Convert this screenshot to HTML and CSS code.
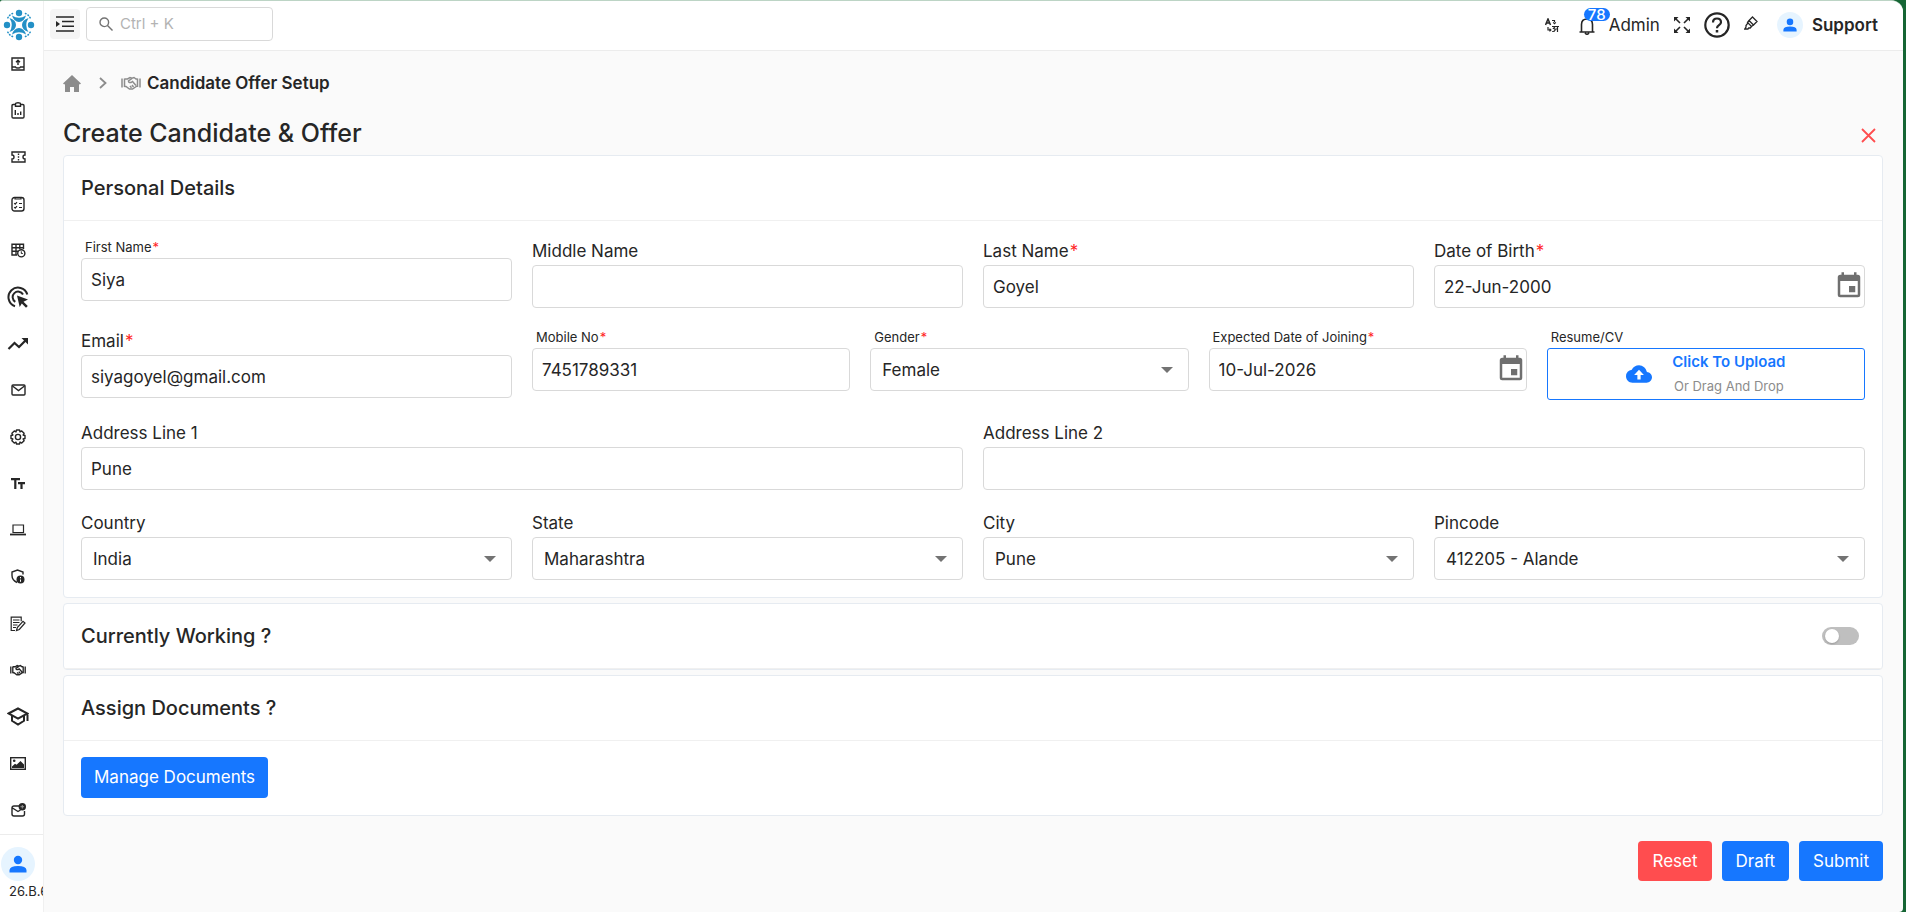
FILE: index.html
```html
<!DOCTYPE html>
<html lang="en">
<head>
<meta charset="utf-8">
<meta name="viewport" content="width=device-width, initial-scale=1">
<title>Candidate Offer Setup</title>
<link rel="stylesheet" href="styles.css">
</head>
<body>
<div class="app">
  <aside class="sidebar">
    <a href="#" class="logo" aria-label="Home">
      <svg width="32" height="32" viewBox="0 0 32 32" fill="#2390c6">
        <circle cx="16" cy="4" r="3.200"/><circle cx="16" cy="28" r="3.200"/><circle cx="4" cy="16" r="3.200"/><circle cx="28" cy="16" r="3.200"/>
        <path d="M9 6.500Q16 11 23 6.500Q21 13 16 13T9 6.500z"/>
        <path d="M9 6.500Q16 11 23 6.500Q21 13 16 13T9 6.500z" transform="rotate(90 16 16)"/>
        <path d="M9 6.500Q16 11 23 6.500Q21 13 16 13T9 6.500z" transform="rotate(180 16 16)"/>
        <path d="M9 6.500Q16 11 23 6.500Q21 13 16 13T9 6.500z" transform="rotate(270 16 16)"/>
        <g fill="none" stroke="#2390c6" stroke-width="1.600" stroke-linecap="round" stroke-dasharray="0.500 2.400"><path d="M9.500 4.500Q6 6 4.500 9.500M22.500 4.500Q26 6 27.500 9.500M9.500 27.500Q6 26 4.500 22.500M22.500 27.500Q26 26 27.500 22.500"/></g>
      </svg>
    </a>
    <nav class="menu" aria-label="Modules">
      <a href="#" aria-label="Outbox"><svg width="14" height="14" viewBox="0 0 14 14"><path d="M1 1h12v12H1zM1 10h3.500c.5 1.400 4.500 1.400 5 0H13M7 8V3.500M5 5.300l2-2 2 2"/></svg></a>
      <a href="#" aria-label="Reports"><svg width="14" height="17" viewBox="0 0 14 17"><path d="M4.500 2.500H2.200Q1 2.500 1 3.700v11.100Q1 16 2.200 16h9.600q1.200 0 1.200-1.200V3.700q0-1.200-1.200-1.200H9.500M4.500 1.800Q4.500.8 7 .8t2.500 1v2.400h-5zM4.300 13V8M7 13v-2M9.700 13V9.500"/></svg></a>
      <a href="#" aria-label="Tickets"><svg width="15" height="12" viewBox="0 0 15 12"><path d="M1 1h13v3q-2 0-2 2t2 2v3H1V8q2 0 2-2T1 4z"/><path d="M7.500 2.500v7" stroke-dasharray="1.500 1.200"/></svg></a>
      <a href="#" aria-label="Tasks"><svg width="14" height="16" viewBox="0 0 14 16"><rect x="1" y="1.500" width="12" height="13.500" rx="2.500"/><path d="M4 1v2h6V1M3.200 7.200l1 1L6 6.200M3.200 11.200l1 1 1.800-2M8 7.500h3M8 11.500h3" stroke-width="1.200"/></svg></a>
      <a href="#" aria-label="Attendance"><svg width="15" height="15" viewBox="0 0 15 15"><path d="M6 12H1V1.200h11.500V6M1 4.700h11.500M1 8.300h6M5 1.200V12M8.800 1.200V6"/><circle cx="10.300" cy="10.300" r="3.600" fill="#fff"/><path d="M10.300 8.300v2.200h1.500" stroke-width="1"/></svg></a>
      <a href="#" aria-label="Goals"><svg width="22" height="22" viewBox="0 0 22 22"><path d="M8 20.300A9.600 9.600 0 1 1 20.300 8.500M8.300 15.800A5.500 5.500 0 1 1 16 8.500" stroke-width="2"/><path d="M10 9.500l11 4-4.500 2.300 4.300 4.200-1.800 1.700-4.200-4.200L12.700 21z" fill="#262626" stroke="none"/></svg></a>
      <a href="#" aria-label="Performance"><svg width="22" height="14" viewBox="0 0 22 14"><path d="M1.500 12l6-6 4.500 4L19 3" stroke-width="2.200"/><path d="M14.500 1H21v6.500z" fill="#262626" stroke="none"/></svg></a>
      <a href="#" aria-label="Mail"><svg width="15" height="12" viewBox="0 0 15 12"><rect x="1" y="1" width="13" height="10" rx="1"/><path d="M1.500 2l6 4.500 6-4.500"/></svg></a>
      <a href="#" aria-label="Settings"><svg width="16" height="16" viewBox="0 0 16 16"><path d="M6.500 1h3l.5 1.900 1.700-1 2.400 2.400-1 1.700 1.900.5v3l-1.900.5 1 1.700-2.400 2.400-1.700-1-.5 1.900h-3L6 13.100l-1.700 1-2.400-2.400 1-1.700L1 9.500v-3L2.900 6l-1-1.700 2.400-2.400 1.700 1z" stroke-linejoin="round"/><circle cx="8" cy="8" r="2.600"/></svg></a>
      <a href="#" aria-label="Text formats"><svg width="14" height="12" viewBox="0 0 14 12"><path d="M0 1.200h9M4.300 1v10M7 5.200h7M10.500 5v6" stroke-width="2.200"/></svg></a>
      <a href="#" aria-label="Assets"><svg width="16" height="12" viewBox="0 0 16 12"><path d="M3 8.500V1h10.500v7.500z" stroke-width="1.200"/><path d="M0 10.500h16" stroke-width="1.800"/></svg></a>
      <a href="#" aria-label="Security"><svg width="14" height="15" viewBox="0 0 14 15"><path d="M6 13.500Q1 11 1 6.500V3l5.500-2 5.500 2v2.500"/><circle cx="9.500" cy="10.500" r="4" fill="#262626" stroke="none"/><path d="M9.500 8v1.300M9.500 10.500v2.300" stroke="#fff" stroke-width="1"/></svg></a>
      <a href="#" aria-label="Notes"><svg width="16" height="16" viewBox="0 0 16 16"><path d="M5 14.500H1.200V1.200h10v4M3 4h6.500M3 6.500h6.500M3 9h4.500M3 11.500h3" stroke-width="1.200"/><path d="M6.500 14.500l.8-3L13 5.300l2 1.700-5.700 6.500z" stroke-width="1.200"/></svg></a>
      <a href="#" aria-label="Offers"><svg width="16" height="12" viewBox="0 0 20 14"><path d="M1 2.500v9M3.500 2.500v8.500M19 2.500v9M16.500 2.500v8.500M3.500 3h3L9 1.500l2 .7L13 1.500 15 3h1.500M3.500 10.500H5L8.500 13h3l4.500-3M11 2.500L7.500 5q0 2 2.500 1.500l1.500-1L15 9.500M11 9l1.500 2M9 10l1.500 1.800" stroke-width="1.700"/></svg></a>
      <a href="#" aria-label="Learning"><svg width="22" height="19" viewBox="0 0 22 19"><path d="M1.500 6.500L11 1.500l9.500 5L11 11.700zM5 8.800v5L11 17.500l6-3.700v-5M20.500 6.500V14" stroke-width="2"/></svg></a>
      <a href="#" aria-label="Gallery"><svg width="16" height="13" viewBox="0 0 16 13"><rect x=".7" y=".7" width="14.600" height="11.600"/><path d="M2 11V9.500L5 6.800l1.600 1L10.500 4 14 7.500V11z" fill="#262626" stroke="none"/><circle cx="4.200" cy="3.800" r="1.300" fill="#262626" stroke="none"/></svg></a>
      <a href="#" aria-label="Invitations"><svg width="15" height="14" viewBox="0 0 15 14"><path d="M8 3H3Q1 3 1 5v6q0 2 2 2h8.500q2 0 2-2V8M1.500 5l5.500 3.500 2.500-1.500"/><circle cx="11.300" cy="3.700" r="3.700" fill="#262626" stroke="none"/><path d="M9.500 3.700h3.600M11.300 2v3.500" stroke="#999" stroke-width="1"/></svg></a>
    </nav>
    <div class="account">
      <button type="button" class="avatar avatar-lg" aria-label="Account"><svg width="18" height="18" viewBox="0 0 18 18" fill="#1677ff"><circle cx="9" cy="5" r="4.200"/><path d="M.5 17.500V15Q1 11 9 11t8.500 4v2.500z"/></svg></button>
      <span class="version">26.B.6</span>
    </div>
  </aside>

  <div class="page">
    <header class="topbar">
      <button type="button" class="collapse" aria-label="Toggle menu"><svg width="18" height="16" viewBox="0 0 18 16" fill="none" stroke="#262626" stroke-width="1.600"><path d="M0 1h18M6 5.500h12M6 10.300h12M0 15h18"/><path d="M0 5v6l4-3z" fill="#262626" stroke="none"/></svg></button>
      <div class="search">
        <svg width="14" height="14" viewBox="0 0 14 14" fill="none" stroke="#737373" stroke-width="1.400"><circle cx="5.300" cy="5.300" r="4.300"/><path d="M8.500 8.500l5 5"/></svg>
        <input type="text" placeholder="Ctrl + K" aria-label="Search">
      </div>
      <div class="tools">
        <button type="button" class="tool" aria-label="Translate"><svg width="14" height="15" viewBox="0 0 14 15" fill="none" stroke="#262626" stroke-width="1.200"><path d="M.5 7L3 1l2.500 6M1.300 5h3.400" stroke-width="1.500"/><path d="M7 2.500h2.500V4M8.200 4.300l1.300 1.400 1.300-1.400M3 9v3h2M4.500 10.700L5.900 12l-1.400 1.400M7 8.500h3l-1.500 2q2 .2 1.500 1.700T7.200 13.500M10.500 8.500H14M12.500 8.500V14M10.500 11h2"/></svg></button>
        <button type="button" class="bell" aria-label="Notifications, 78 unread"><svg width="16" height="18" viewBox="0 0 16 18" fill="none" stroke="#262626" stroke-width="1.600"><path d="M.5 15h15M2.500 15V7.500Q2.500 2 8 2t5.500 5.500V15M6 16q2 2.500 4 0"/></svg><span class="badge">78</span></button>
        <span class="role">Admin</span>
        <button type="button" class="tool fullscreen" aria-label="Full screen"><svg width="16" height="16" viewBox="0 0 16 16" fill="none" stroke="#262626" stroke-width="1.600"><path d="M1.500 1.500l4.500 4.500M14.500 1.500L10 6M1.500 14.500L6 10M14.500 14.500L10 10"/><path d="M0 0h4.500L0 4.500zM16 0v4.500L11.500 0zM0 16v-4.500L4.500 16zM16 16h-4.500l4.500-4.500z" fill="#262626" stroke="none"/></svg></button>
        <button type="button" class="tool help" aria-label="Help"><svg width="26" height="26" viewBox="0 0 26 26" fill="none" stroke="#262626" stroke-width="2.200"><circle cx="13" cy="13" r="11.700"/><path d="M9 10.500Q9 6.500 13 6.500t4 3.700q0 1.600-2 3t-2 3"/><path d="M13 18v2.500" stroke-width="2.500"/></svg></button>
        <button type="button" class="tool marker" aria-label="Theme"><svg width="14" height="14" viewBox="0 0 14 14" fill="none" stroke="#262626" stroke-width="1.300"><path d="M8.500 1L13 5.500 9.500 9 5 4.500zM5 4.500L3.500 6.500l4 4L9.500 9M3.800 7.200L2 9.500V11L.8 13H4l.7-1h1.500l1.300-1.500"/></svg></button>
        <button type="button" class="profile"><span class="avatar"><svg width="14" height="14" viewBox="0 0 18 18" fill="#1677ff"><circle cx="9" cy="5" r="4.200"/><path d="M.5 17.500V15Q1 11 9 11t8.500 4v2.500z"/></svg></span>Support</button>
      </div>
    </header>

    <main class="content">
      <nav class="breadcrumb" aria-label="Breadcrumb">
        <a href="#" aria-label="Home"><svg width="18" height="17" viewBox="0 0 18 17" fill="#8c8c8c"><path d="M9 0l9 8.500-1.200 1L16 9v8h-5v-5H7v5H2V9l-.8.500L0 8.500z"/></svg></a>
        <svg class="chevron" width="8" height="12" viewBox="0 0 8 12" fill="none" stroke="#8c8c8c" stroke-width="1.800"><path d="M1 1l5.500 5L1 11"/></svg>
        <svg width="20" height="14" viewBox="0 0 20 14" fill="none" stroke="#8c8c8c" stroke-width="1.500"><path d="M1 2.500v9M3.500 2.500v8.500M19 2.500v9M16.500 2.500v8.500M3.500 3h3L9 1.500l2 .7L13 1.500 15 3h1.500M3.500 10.500H5L8.500 13h3l4.500-3M11 2.500L7.500 5q0 2 2.500 1.500l1.500-1L15 9.500M11 9l1.500 2M9 10l1.500 1.800"/></svg>
        <span class="crumb">Candidate Offer Setup</span>
      </nav>
      <div class="title-row">
        <h1>Create Candidate &amp; Offer</h1>
        <button type="button" class="close" aria-label="Close"><svg width="15" height="15" viewBox="0 0 15 15" fill="none" stroke="#ff4d4f" stroke-width="1.800"><path d="M1 1l13 13M14 1L1 14"/></svg></button>
      </div>

      <form class="offer">
        <section class="card">
          <h2 class="card-head">Personal Details</h2>
          <div class="card-body rows">
            <div class="row row-4">
              <div class="field small"><label for="first">First Name<b>*</b></label><input id="first" type="text" value="Siya"></div>
              <div class="field"><label for="middle">Middle Name</label><input id="middle" type="text"></div>
              <div class="field"><label for="last">Last Name<b>*</b></label><input id="last" type="text" value="Goyel"></div>
              <div class="field"><label for="dob">Date of Birth<b>*</b></label>
                <div class="date"><input id="dob" type="text" value="22-Jun-2000"><button type="button" aria-label="Choose date of birth"><svg width="30" height="30" viewBox="0 0 24 24" fill="#6f6f6f"><path d="M17 12h-5v5h5zM16 1v2H8V1H6v2H5a2 2 0 0 0-2 2v14a2 2 0 0 0 2 2h14a2 2 0 0 0 2-2V5a2 2 0 0 0-2-2h-1V1zm3 18H5V8h14z"/></svg></button></div></div>
            </div>
            <div class="row row-4">
              <div class="field"><label for="email">Email<b>*</b></label><input id="email" type="email" value="siyagoyel@gmail.com"></div>
              <div class="row row-contact">
                <div class="field small"><label for="mobile">Mobile No<b>*</b></label><input id="mobile" type="tel" value="7451789331"></div>
                <div class="field small"><label for="gender">Gender<b>*</b></label><div class="select"><select id="gender"><option>Female</option><option>Male</option></select></div></div>
                <div class="field small"><label for="joining">Expected Date of Joining<b>*</b></label>
                  <div class="date"><input id="joining" type="text" value="10-Jul-2026"><button type="button" aria-label="Choose date of joining"><svg width="30" height="30" viewBox="0 0 24 24" fill="#6f6f6f"><path d="M17 12h-5v5h5zM16 1v2H8V1H6v2H5a2 2 0 0 0-2 2v14a2 2 0 0 0 2 2h14a2 2 0 0 0 2-2V5a2 2 0 0 0-2-2h-1V1zm3 18H5V8h14z"/></svg></button></div></div>
                <div class="field small"><label for="resume">Resume/CV</label>
                  <button type="button" id="resume" class="upload"><svg width="26" height="26" viewBox="0 0 24 24" fill="#1677ff"><path d="M19.350 10.040A7.490 7.490 0 0 0 12 4C9.110 4 6.600 5.640 5.350 8.040A5.994 5.994 0 0 0 0 14c0 3.310 2.690 6 6 6h13c2.760 0 5-2.240 5-5 0-2.640-2.050-4.780-4.650-4.960zM13.500 13v4h-3v-4H7.500l4.500-5 4.500 5z"/></svg>
                    <span class="upload-text"><strong>Click To Upload</strong><span>Or Drag And Drop</span></span></button></div>
              </div>
            </div>
            <div class="row row-2">
              <div class="field"><label for="addr1">Address Line 1</label><input id="addr1" type="text" value="Pune"></div>
              <div class="field"><label for="addr2">Address Line 2</label><input id="addr2" type="text"></div>
            </div>
            <div class="row row-4">
              <div class="field"><label for="country">Country</label><div class="select"><select id="country"><option>India</option></select></div></div>
              <div class="field"><label for="state">State</label><div class="select"><select id="state"><option>Maharashtra</option></select></div></div>
              <div class="field"><label for="city">City</label><div class="select"><select id="city"><option>Pune</option></select></div></div>
              <div class="field"><label for="pin">Pincode</label><div class="select"><select id="pin"><option>412205 - Alande</option></select></div></div>
            </div>
          </div>
        </section>

        <section class="card">
          <div class="card-head"><h2 id="working">Currently Working ?</h2><input type="checkbox" class="switch" role="switch" aria-labelledby="working"></div>
        </section>

        <section class="card">
          <h2 class="card-head">Assign Documents ?</h2>
          <div class="card-body documents"><button type="button" class="btn">Manage Documents</button></div>
        </section>

        <div class="actions">
          <button type="reset" class="btn danger">Reset</button>
          <button type="button" class="btn">Draft</button>
          <button type="submit" class="btn">Submit</button>
        </div>
      </form>
    </main>
  </div>
</div>
</body>
</html>
```
FILE: styles.css
```css
* { box-sizing: border-box; }
body {
  margin: 0;
  background: #156534;
  color: #262626;
  font: 17px/22px Inter, "Liberation Sans", sans-serif;
}
button, input, select { font: inherit; color: inherit; margin: 0; }
button { border: 0; padding: 0; background: none; cursor: pointer; }
svg { display: block; flex: none; }
h1, h2 { margin: 0; font-weight: 500; }

.app {
  display: flex;
  min-height: 100vh;
  margin-right: 3px;
  border-top: 1px solid #bcd4c5;
  border-radius: 3px 12px 4px 0;
  background: #fafafa;
  overflow: hidden;
}

.sidebar {
  display: flex;
  flex-direction: column;
  flex: none;
  width: 44px;
  background: #fff;
  border-right: 1px solid #f0f0f0;
  overflow: hidden;
}
.logo { padding: 8px 0 0 3px; }
.menu {
  display: flex;
  flex: 1;
  flex-direction: column;
  justify-content: space-between;
  padding: 11px 7px 12px 0;
}
.menu a { display: grid; place-items: center; height: 24px; }
.menu svg { fill: none; stroke: #262626; stroke-width: 1.4; }
.account { height: 78px; border-top: 1px solid #ececec; padding: 12px 0 0 1px; }
.avatar {
  display: grid;
  place-items: center;
  width: 26px;
  height: 26px;
  border-radius: 50%;
  background: #e6f4ff;
}
.avatar-lg { width: 34px; height: 34px; }
.version { display: block; padding-left: 8px; font-size: 13px; line-height: 20px; white-space: nowrap; }

.page { flex: 1; min-width: 0; }
.topbar {
  display: flex;
  align-items: center;
  height: 50px;
  padding: 0 25px 3px 6px;
  background: #fff;
  border-bottom: 1px solid #ececec;
}
.collapse { display: grid; place-items: center; width: 30px; height: 30px; border-radius: 4px; background: #f5f5f5; }
.search {
  display: flex;
  align-items: center;
  gap: 7px;
  width: 187px;
  height: 34px;
  margin-left: 6px;
  padding: 0 12px;
  border: 1px solid #d9d9d9;
  border-radius: 4px;
}
.search input { flex: 1; min-width: 0; padding: 0; border: 0; outline: 0; background: none; font-size: 15px; }
.search input::placeholder { color: #b3b3b3; }
.tools { display: flex; align-items: center; margin-left: auto; padding-top: 2px; }
.bell { position: relative; margin-left: 20px; padding-top: 2px; }
.badge {
  position: absolute;
  left: 5px;
  top: -7px;
  width: 26px;
  height: 13px;
  border-radius: 7px;
  background: #1677ff;
  color: #fff;
  font-size: 15px;
  font-weight: 500;
  line-height: 13px;
}
.role { margin-left: 14px; }
.fullscreen, .help, .marker { margin-left: 14px; }
.marker { padding-bottom: 4px; }
.profile { display: flex; align-items: center; gap: 9px; margin-left: 19px; font-weight: 600; }

.content { padding: 20px 20px 24px 19px; }
.breadcrumb { display: flex; align-items: center; height: 24px; }
.chevron { margin: 0 14px 0 18px; }
.crumb { margin-left: 6px; font-weight: 600; }
.title-row { display: flex; align-items: center; justify-content: space-between; height: 60px; padding: 16px 7px 0 0; }
h1 { font-size: 25px; line-height: 32px; }
.close { padding-top: 5px; }

.offer { display: flex; flex-direction: column; gap: 5px; }
.card { border: 1px solid #e6ebf1; border-radius: 4px; background: #fff; }
.card-head {
  display: flex;
  align-items: center;
  justify-content: space-between;
  height: 65px;
  padding: 0 23px 0 17px;
  border-bottom: 1px solid #f0f0f0;
  font-size: 20px;
}
.card-head h2 { font-size: 20px; }
.card-body { padding: 19px 17px 17px; }
.rows { display: flex; flex-direction: column; gap: 22px; }
.row { display: grid; column-gap: 20px; }
.row-4 { grid-template-columns: repeat(4, minmax(0, 1fr)); }
.row-2 { grid-template-columns: repeat(2, minmax(0, 1fr)); }
.row-contact { grid-column: span 3; grid-template-columns: repeat(4, minmax(0, 1fr)); }

.field { display: flex; flex-direction: column; gap: 3px; }
.field label { line-height: 22px; }
.field.small label { padding: 0 4px; font-size: 13px; line-height: 15px; }
.field label b { margin-left: 1px; color: #ff1f1f; font-weight: 400; }
.field input, .field select {
  width: 100%;
  height: 43px;
  padding: 0 9px;
  border: 1px solid #d9d9d9;
  border-radius: 4px;
  background: #fff;
  outline: 0;
}
.field select { appearance: none; padding-left: 11px; }
.select, .date { display: flex; position: relative; }
.select::after {
  content: "";
  position: absolute;
  right: 16px;
  top: 19px;
  border: 6px solid transparent;
  border-top-color: #737373;
  border-bottom: 0;
  pointer-events: none;
}
.date button { position: absolute; right: 1px; top: 6px; }
.upload {
  display: flex;
  align-items: center;
  justify-content: center;
  gap: 20px;
  height: 52px;
  border: 1px solid #1677ff;
  border-radius: 3px;
}
.upload-text { display: flex; flex-direction: column; line-height: 24px; font-size: 13px; color: #8c8c8c; }
.upload-text strong { color: #1677ff; font-size: 15px; font-weight: 600; }

.switch {
  appearance: none;
  width: 37px;
  height: 18px;
  padding: 2px 3px;
  border-radius: 9px;
  background: #bfbfbf;
}
.switch::before { content: ""; display: block; width: 14px; height: 14px; border-radius: 50%; background: #fff; box-shadow: 0 1px 2px #0003; }
.switch:checked { background: #1677ff; }
.switch:checked::before { margin-left: auto; }

.documents { display: flex; padding: 16px 17px 17px; }
.btn { height: 40px; padding: 0 14px 1px; border-radius: 4px; background: #1677ff; color: #fff; }
.documents .btn { height: 41px; padding: 0 13px 1px; }
.danger { background: #ff4d4f; }
.actions { display: flex; justify-content: flex-end; gap: 10px; padding-top: 20px; }
```
